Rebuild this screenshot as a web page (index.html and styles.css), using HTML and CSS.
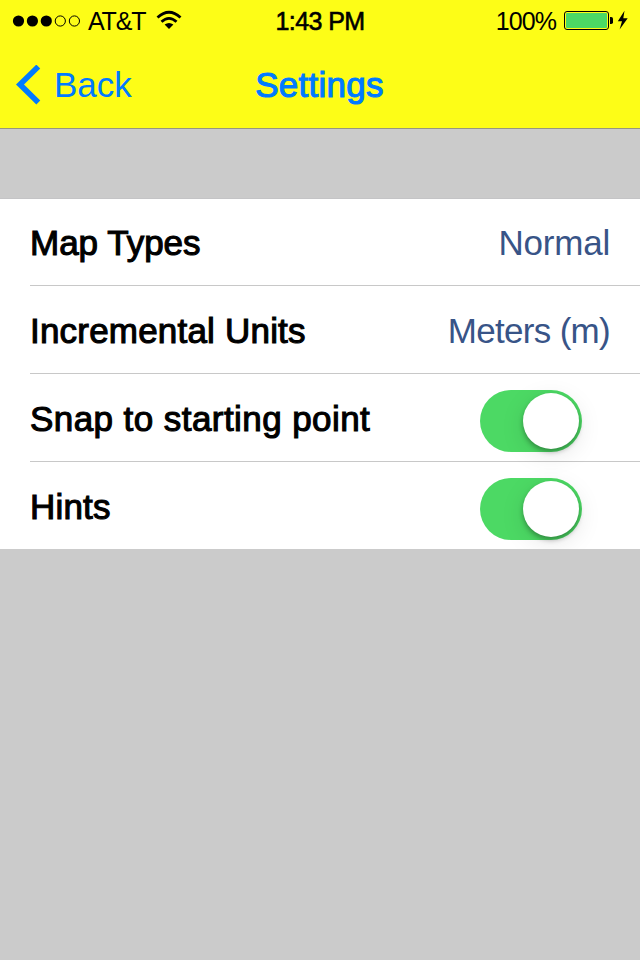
FILE: index.html
```html
<!DOCTYPE html>
<html lang="en">
<head>
<meta charset="utf-8">
<title>Settings</title>
<link rel="stylesheet" href="styles.css">
</head>
<body>
<header class="header">
  <div class="status">
    <div class="status-left">
      <svg class="signal" width="70" height="14" viewBox="0 0 70 14"><circle cx="6.5" cy="7" r="5.6"/><circle cx="20.4" cy="7" r="5.6"/><circle cx="34.3" cy="7" r="5.6"/><g fill="none" stroke="#000" stroke-width="1"><circle cx="48.3" cy="7" r="5.1"/><circle cx="62.4" cy="7" r="5.1"/></g></svg>
      <span class="carrier">AT&amp;T</span>
      <svg class="wifi" width="26" height="20" viewBox="0 0 26 20"><g fill="none" stroke="#000" stroke-width="2.8"><path d="M1.5 7.6Q13 -3.1 24.5 7.6"/><path d="M5.5 11.8Q13 4.9 20.5 11.8"/></g><path d="M8.6 14.6Q13 11.3 17.4 14.6L13 19Z"/></svg>
    </div>
    <span class="time">1:43 PM</span>
    <div class="status-right">
      <span class="percent">100%</span>
      <svg class="battery" width="64" height="22" viewBox="0 0 64 22"><rect x=".5" y="1.5" width="44" height="18" rx="2.5" fill="none" stroke="#000"/><rect x="2" y="3" width="41" height="15" rx="1" fill="#4cd964"/><path d="M46 7h1.2a1.8 1.8 0 0 1 1.8 1.8v3.4a1.8 1.8 0 0 1-1.8 1.8H46z"/><path d="M60.5 .8L53.8 11.2H58L55.6 19.6L63.7 8.2H59.3Z"/></svg>
    </div>
  </div>
  <nav class="nav">
    <a class="back"><svg width="26" height="40" viewBox="0 0 26 40"><path d="M23.3 1.6L5 19.5L23.3 37.4" fill="none" stroke="#007aff" stroke-width="5.6"/></svg><span class="back-label">Back</span></a>
    <h1 class="title">Settings</h1>
  </nav>
</header>
<main class="list">
  <div class="row"><span class="label map">Map Types</span><span class="value normal">Normal</span></div>
  <div class="row"><span class="label units">Incremental Units</span><span class="value meters">Meters (m)</span></div>
  <div class="row"><span class="label snap">Snap to starting point</span><span class="switch"><span class="knob"></span></span></div>
  <div class="row"><span class="label hints">Hints</span><span class="switch"><span class="knob"></span></span></div>
</main>
</body>
</html>
```
FILE: styles.css
```css
* { box-sizing: border-box; }
body { margin: 0; height: 960px; overflow: hidden; background: #cbcbcb; color: #000; font-family: "Liberation Sans", sans-serif; }
svg { display: block; flex: none; }
.header { height: 129px; background: #fdfd17; border-bottom: 1px solid #96967f; }
.status { height: 40px; display: grid; grid-template-columns: 1fr auto 1fr; align-items: center; line-height: 42px; font-size: 25px; white-space: nowrap; }
.status-left { display: flex; align-items: center; padding-left: 12px; }
.signal { margin-bottom: 1px; }
.carrier { margin-left: 6px; width: 58px; letter-spacing: -1.2px; }
.wifi { margin-left: 10px; margin-bottom: 2px; }
.time { letter-spacing: -.6px; -webkit-text-stroke: .6px #000; }
.status-right { display: flex; align-items: center; justify-content: flex-end; padding-right: 12px; }
.percent { margin-right: 8px; letter-spacing: -.9px; }
.nav { height: 88px; display: grid; grid-template-columns: 1fr auto 1fr; align-items: center; line-height: 90px; color: #007aff; font-size: 35px; }
.back { display: flex; align-items: center; padding-left: 15px; }
.back-label { margin-left: 13px; }
.title { margin: 0 1px 0 0; font-size: 35px; font-weight: 400; letter-spacing: .25px; -webkit-text-stroke: 1.1px #007aff; }
.list { margin-top: 69px; border-top: 1px solid #c4c4c6; background: #fff; overflow: hidden; }
.row { height: 88px; margin-left: 30px; padding-right: 30px; border-bottom: 1px solid #c8c8c8; display: flex; justify-content: space-between; line-height: 89px; font-size: 35px; white-space: nowrap; }
.row:first-child { height: 87px; line-height: 87px; }
.row:last-child { height: 87px; border-bottom: 0; }
.label { -webkit-text-stroke: 1.1px #000; }
.units { letter-spacing: .2px; }
.snap { letter-spacing: .43px; }
.hints { letter-spacing: .2px; }
.value { color: #385487; }
.normal { letter-spacing: -.2px; }
.meters { letter-spacing: -.7px; }
.switch { width: 102px; height: 62px; margin: 16px 28px 0 0; padding: 3px; border-radius: 31px; background: #4cd964; display: flex; justify-content: flex-end; }
.knob { width: 56px; height: 56px; border-radius: 50%; background: #fff; box-shadow: 0 6px 24px rgba(0,0,0,.1), 0 3px 5px rgba(0,0,0,.3); }
```
